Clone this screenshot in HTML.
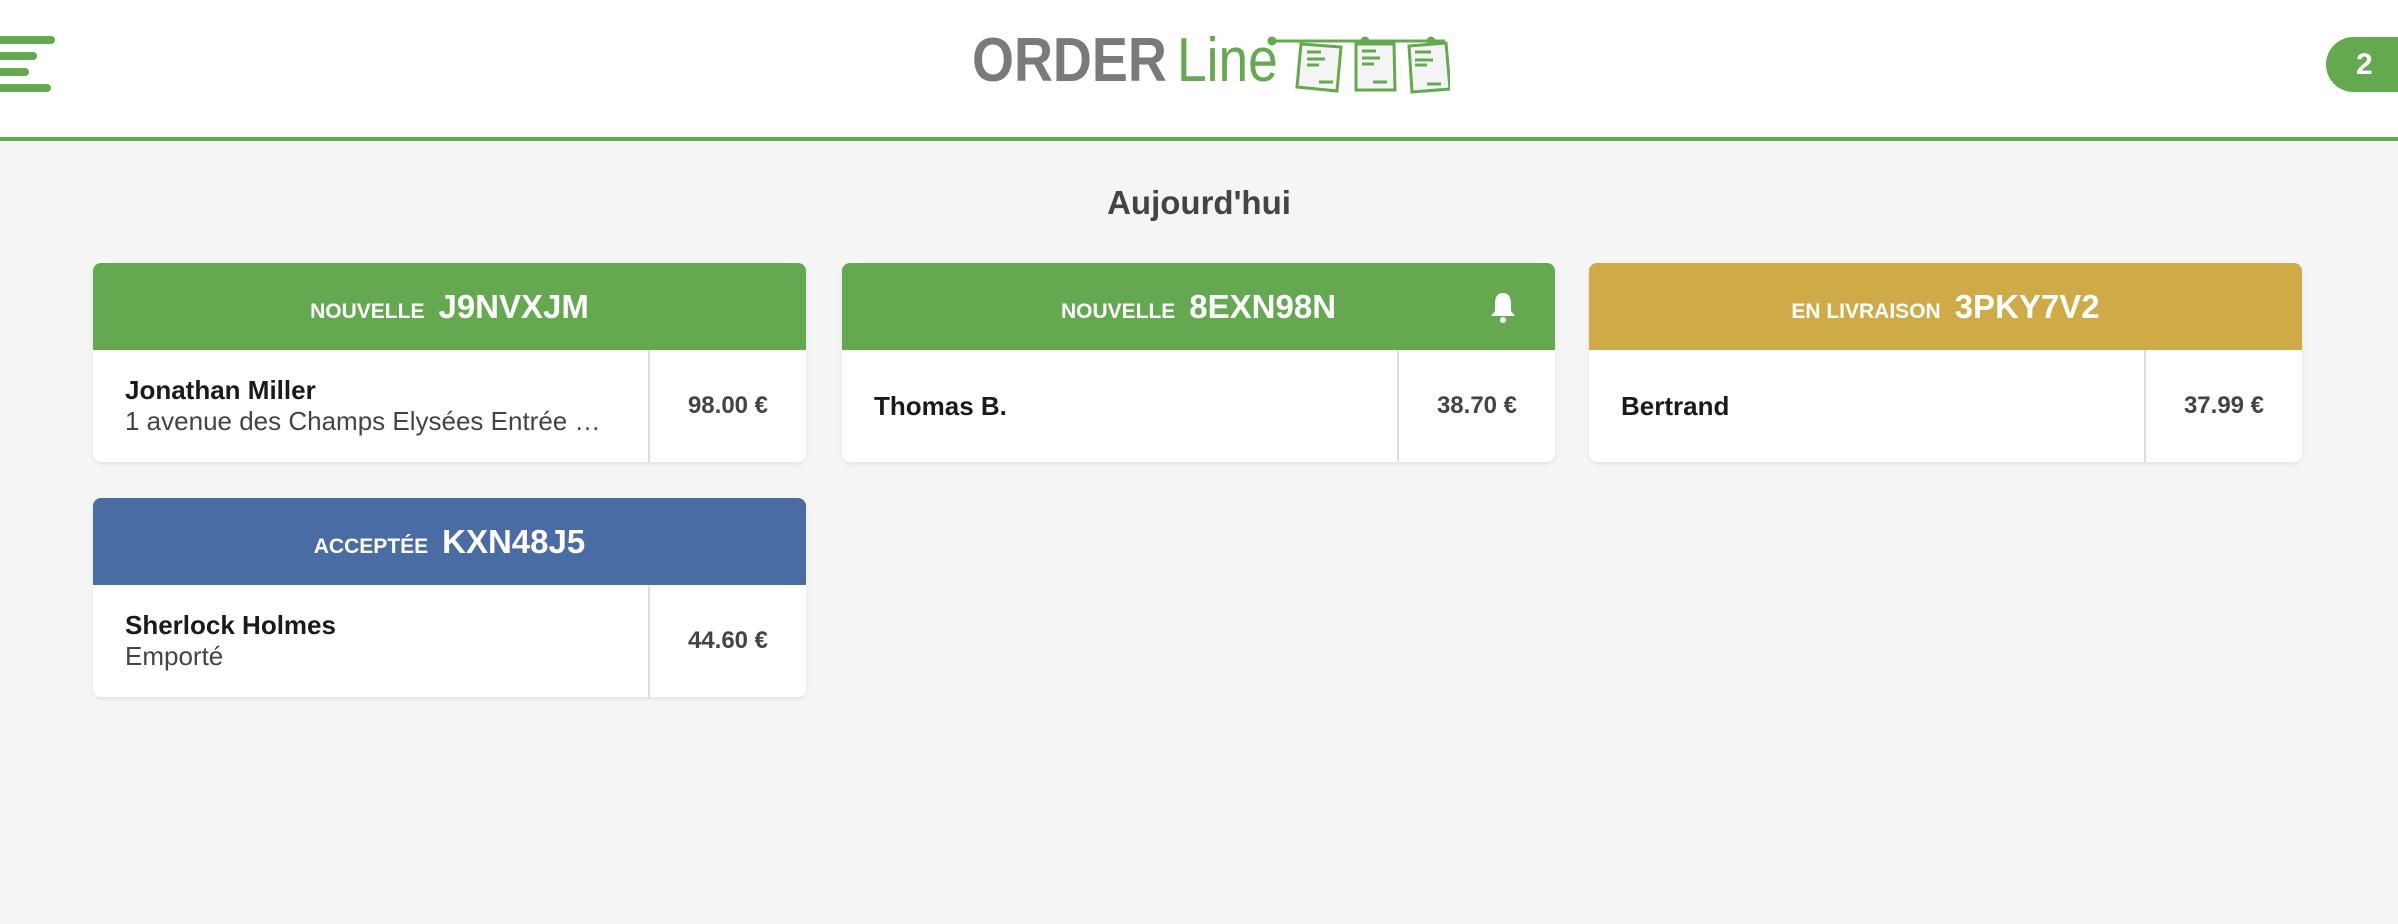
<!DOCTYPE html>
<html><head><meta charset="utf-8"><style>
*{margin:0;padding:0;box-sizing:border-box}
body{width:2398px;height:924px;background:#f5f5f5;font-family:"Liberation Sans",sans-serif;position:relative;overflow:hidden}
.top{position:absolute;left:0;top:0;width:2398px;height:141px;background:#fff;border-bottom:4px solid #64a94f}
.bar{position:absolute;left:0;height:8px;background:#64a94f;border-radius:0 4px 4px 0}
.badge{position:absolute;left:2326px;top:37px;width:80px;height:55px;background:#64a94f;border-radius:28px 0 0 28px;color:#fff;font-weight:bold;font-size:30px;line-height:55px;padding-left:30px}
.title{position:absolute;top:184px;left:0;width:2398px;text-align:center;font-size:33px;font-weight:bold;color:#444}
.card{position:absolute;width:713px;height:199px;background:#fff;border-radius:8px;overflow:hidden;box-shadow:0 2px 4px rgba(0,0,0,.08)}
.hd{height:87px;color:#fff;text-align:center;line-height:87px;position:relative}
.hd .l{font-size:21px;font-weight:bold;margin-right:14px}
.hd .c{font-size:33px;font-weight:bold}
.bd{height:112px;display:flex}
.info{flex:1;padding-left:32px;display:flex;flex-direction:column;justify-content:center;font-size:26px;color:#222;border-right:2px solid #ddd}
.info b{color:#1a1a1a}
.info span{color:#444}
.pr{width:156px;display:flex;align-items:center;justify-content:center;font-size:24px;font-weight:bold;color:#444}
.g{background:#64a94f}.y{background:#cfab48}.bl{background:#486ca3}
.lg{position:absolute;top:26px;font-size:62px;line-height:70px;transform-origin:0 0;white-space:nowrap}
</style></head><body>
<div class="top">
<div class="bar" style="top:36px;width:55px"></div>
<div class="bar" style="top:52px;width:37px"></div>
<div class="bar" style="top:68px;width:29px"></div>
<div class="bar" style="top:84px;width:51px"></div>
<div class="lg" style="left:972px;font-weight:bold;color:#7a7a7a;transform:scaleX(0.87)">ORDER</div>
<div class="lg" style="left:1177px;color:#64a94f;transform:scaleX(0.86)">Line</div>
<svg style="position:absolute;left:1210px;top:34px" width="240" height="62" viewBox="0 0 240 62" fill="none" stroke="#64a94f" stroke-width="3">
<line x1="62" y1="7" x2="235" y2="7"/>
<circle cx="62" cy="7" r="3" fill="#64a94f"/><circle cx="155" cy="7" r="3" fill="#64a94f"/><circle cx="221" cy="7" r="3" fill="#64a94f"/>
<path d="M91 10 L131 13 L127 57 L87 53 Z" fill="#f4f4f4"/>
<path d="M97 18h14M97 25h18M97 31h12M109 48h14"/>
<path d="M146 10 L184 10 L185 56 L146 56 Z" fill="#f4f4f4"/>
<path d="M152 17h14M152 24h18M152 30h12M163 48h14"/>
<path d="M199 12 L236 9 L240 55 L202 58 Z" fill="#f4f4f4"/>
<path d="M205 18h16M205 26h18M205 31h12M217 50h14"/>
</svg>
</div>
<div class="badge">2</div>
<div class="title">Aujourd'hui</div>

<div class="card" style="left:93px;top:263px"><div class="hd g"><span class="l">NOUVELLE</span><span class="c">J9NVXJM</span></div>
<div class="bd"><div class="info"><b>Jonathan Miller</b><span>1 avenue des Champs Elysées Entrée …</span></div><div class="pr">98.00 €</div></div></div>

<div class="card" style="left:842px;top:263px"><div class="hd g"><span class="l">NOUVELLE</span><span class="c">8EXN98N</span>
<svg style="position:absolute;right:38px;top:28px" width="28" height="34" viewBox="0 0 28 34"><path d="M14 2 C8 2 6 7 6 13 L6 20 L2 25 L26 25 L22 20 L22 13 C22 7 20 2 14 2Z" fill="#fff"/><circle cx="14" cy="29" r="3" fill="#fff"/></svg></div>
<div class="bd"><div class="info"><b>Thomas B.</b></div><div class="pr">38.70 €</div></div></div>

<div class="card" style="left:1589px;top:263px"><div class="hd y"><span class="l">EN LIVRAISON</span><span class="c">3PKY7V2</span></div>
<div class="bd"><div class="info"><b>Bertrand</b></div><div class="pr">37.99 €</div></div></div>

<div class="card" style="left:93px;top:498px"><div class="hd bl"><span class="l">ACCEPTÉE</span><span class="c">KXN48J5</span></div>
<div class="bd"><div class="info"><b>Sherlock Holmes</b><span>Emporté</span></div><div class="pr">44.60 €</div></div></div>
</body></html>
